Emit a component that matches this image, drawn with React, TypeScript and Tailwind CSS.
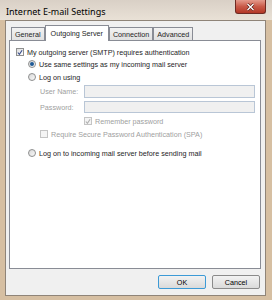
import React from "react";

// Win7 style check box
function CheckBox({ checked, disabled }: { checked?: boolean; disabled?: boolean }) {
  return (
    <div
      className={`w-[8px] h-[8px] shrink-0 border flex items-center justify-center ${
        disabled ? "border-[#c4c4c4] bg-[#f4f4f4]" : "border-[#8e8f8f] bg-gradient-to-br from-[#dcdcdc] to-[#ffffff]"
      }`}
    >
      {checked && (
        <svg width="7" height="7" viewBox="0 0 7 7">
          <path d="M1 3.5 L2.8 5.6 L6 0.8" fill="none" stroke={disabled ? "#b0b0b0" : "#3a4f8c"} strokeWidth="1.3" />
        </svg>
      )}
    </div>
  );
}

function Radio({ checked }: { checked?: boolean }) {
  return (
    <div className="w-[8px] h-[8px] shrink-0 rounded-full border border-[#8e8f8f] bg-gradient-to-br from-[#d8d8d8] to-[#fafafa] flex items-center justify-center">
      {checked && <div className="w-[4px] h-[4px] rounded-full bg-[#1f5a96]" />}
    </div>
  );
}

function Tab({ label, active }: { label: string; active?: boolean }) {
  if (active) {
    return (
      <div className="h-[16px] -mb-px px-[5px] flex items-center bg-white border border-b-0 border-[#898c95] relative z-10">
        {label}
      </div>
    );
  }
  return (
    <div className="h-[13px] mt-[2px] px-[3px] flex items-center bg-gradient-to-b from-[#f2f2f2] to-[#e1e1e1] border border-[#898c95] border-b-0">
      {label}
    </div>
  );
}

export default function App() {
  return (
    <div
      className="w-[272px] h-[300px] bg-[#d6bfa2] flex flex-col text-[#1e1e1e]"
      style={{ fontFamily: '"Liberation Sans", Arial, sans-serif' }}
    >
      {/* Title bar */}
      <div className="h-[20px] shrink-0 flex justify-between bg-gradient-to-b from-[#d9d0c6] to-[#e9e1d6]">
        <div
          className="pl-[6px] pt-[6px] text-[9px] leading-[12px] text-black"
          style={{ fontFamily: '"Noto Sans", sans-serif' }}
        >
          Internet E-mail Settings
        </div>
        <div className="w-[31px] h-[14px] mr-[6px] rounded-b-[3px] border border-t-0 border-[#6e2a22] bg-gradient-to-b from-[#e49a8c] via-[#c95a48] to-[#b33624] flex items-center justify-center">
          <svg width="9" height="8" viewBox="0 0 9 8">
            <path d="M1.5 1 L7.5 7 M7.5 1 L1.5 7" stroke="#5a1d15" strokeWidth="2.6" />
            <path d="M1.5 1 L7.5 7 M7.5 1 L1.5 7" stroke="#ffffff" strokeWidth="1.4" />
          </svg>
        </div>
      </div>

      {/* Client area */}
      <div className="flex-1 ml-[5px] mr-[6px] mb-[4px] bg-[#f0f0f0] border border-[#8f8478] flex flex-col pl-[3px] pr-[4px] pt-[4px] text-[7.2px] leading-[9px]">
        {/* Tabs */}
        <div className="flex items-start pl-[2px]">
          <Tab label="General" />
          <Tab label="Outgoing Server" active />
          <Tab label="Connection" />
          <Tab label="Advanced" />
        </div>

        {/* Panel */}
        <div className="h-[229px] bg-white border border-[#898c95] flex flex-col pl-[6px] pt-[6px]">
          <div className="h-[10px] flex items-center gap-[3px]">
            <CheckBox checked />
            <span>My outgoing server (SMTP) requires authentication</span>
          </div>

          <div className="pl-[12px] flex flex-col">
            <div className="h-[10px] flex items-center gap-[3px] mt-[2px]">
              <Radio checked />
              <span>Use same settings as my incoming mail server</span>
            </div>
            <div className="h-[10px] flex items-center gap-[3px] mt-[3px]">
              <Radio />
              <span>Log on using</span>
            </div>

            <div className="pl-[12px] pr-[5px] flex flex-col text-[#a0a0a0]">
              <div className="flex items-center mt-[3px]">
                <span className="w-[44px] whitespace-nowrap">User Name:</span>
                <div className="flex-1 h-[13px] border border-[#b9c6d6] bg-[#f0f0f0]" />
              </div>
              <div className="flex items-center mt-[3px]">
                <span className="w-[44px] whitespace-nowrap">Password:</span>
                <div className="flex-1 h-[12px] border border-[#b9c6d6] bg-[#f0f0f0]" />
              </div>
              <div className="h-[10px] flex items-center gap-[3px] mt-[3px] pl-[44px]">
                <CheckBox checked disabled />
                <span>Remember password</span>
              </div>
              <div className="h-[10px] flex items-center gap-[3px] mt-[3px]">
                <CheckBox disabled />
                <span>Require Secure Password Authentication (SPA)</span>
              </div>
            </div>

            <div className="h-[10px] flex items-center gap-[3px] mt-[9px]">
              <Radio />
              <span>Log on to incoming mail server before sending mail</span>
            </div>
          </div>
        </div>

        {/* Buttons */}
        <div className="flex justify-end gap-[6px] mt-[6px] pr-[1px]">
          <button className="w-[48px] h-[14px] rounded-[2px] border border-[#3c9ad6] bg-gradient-to-b from-[#f2f2f2] to-[#dadada] text-[7.2px] leading-[9px] text-black">
            OK
          </button>
          <button className="w-[48px] h-[14px] rounded-[2px] border border-[#8a8a8a] bg-gradient-to-b from-[#f2f2f2] to-[#dadada] text-[7.2px] leading-[9px] text-black">
            Cancel
          </button>
        </div>
      </div>
    </div>
  );
}
